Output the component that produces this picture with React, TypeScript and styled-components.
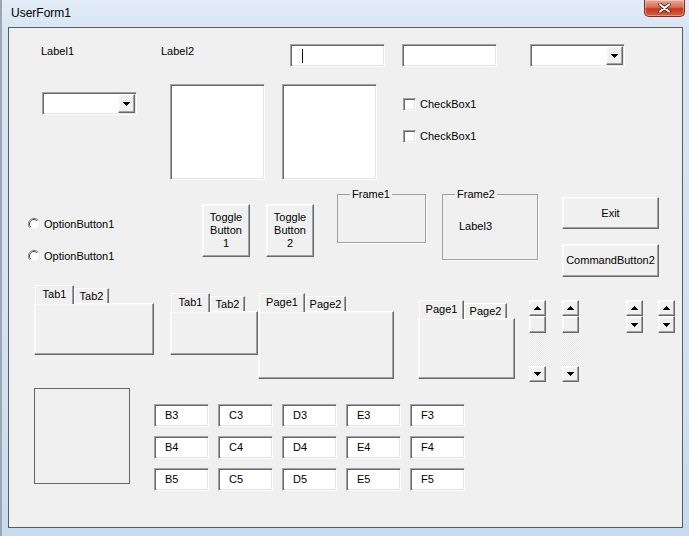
import React from 'react';
import styled, { createGlobalStyle, css } from 'styled-components';

const GlobalStyle = createGlobalStyle`
  html, body { margin: 0; padding: 0; }
  body {
    font-family: 'Liberation Sans', Arial, sans-serif;
    font-size: 11px;
    color: #000;
    background: #cfe0f1;
  }
`;

type Pos = { $x: number; $y: number; $w?: number; $h?: number };

// controls on a UserForm sit at their Left/Top, like a designer canvas
const at = css<Pos>`
  position: absolute;
  left: ${(p) => p.$x}px;
  top: ${(p) => p.$y}px;
  ${(p) => (p.$w !== undefined ? `width: ${p.$w}px;` : '')}
  ${(p) => (p.$h !== undefined ? `height: ${p.$h}px;` : '')}
  box-sizing: border-box;
`;

const sunken = css`
  border: 1px solid;
  border-color: #a0a0a0 #ffffff #ffffff #a0a0a0;
  box-shadow: inset 1px 1px 0 #696969, inset -1px -1px 0 #e3e3e3;
`;

const raised = css`
  border: 1px solid;
  border-color: #ffffff #696969 #696969 #ffffff;
  box-shadow: inset -1px -1px 0 #a0a0a0, inset 1px 1px 0 #f7f7f7;
`;

const Window = styled.div`
  width: 689px;
  height: 536px;
  box-sizing: border-box;
  display: flex;
  flex-direction: column;
  padding: 0 6px 8px 6px;
  border-left: 2px solid #9ba8b4;
  background: linear-gradient(180deg, #e2ecf7 0%, #d6e5f4 6%, #d2e2f2 60%, #c6dbef 100%);
  overflow: hidden;
`;

const TitleBar = styled.div`
  height: 27px;
  display: flex;
  align-items: flex-start;
  justify-content: space-between;
  flex-shrink: 0;
`;

const Title = styled.span`
  font-size: 12px;
  line-height: 15px;
  margin: 6px 0 0 3px;
  color: #000;
`;

const CloseBtn = styled.div`
  width: 41px;
  height: 17px;
  margin-right: -2px;
  box-sizing: border-box;
  border: 1px solid #7a2e22;
  border-top: none;
  border-radius: 0 0 5px 5px;
  background: linear-gradient(180deg, #eaa999 0%, #d96d55 45%, #c23a1f 55%, #d5603f 100%);
  box-shadow: inset 0 0 0 1px rgba(255, 255, 255, 0.35);
  display: flex;
  align-items: center;
  justify-content: center;
`;

const Client = styled.div`
  position: relative;
  flex: 1;
  background: #f0f0f0;
  border: 1px solid #5a5a5a;
`;

const Label = styled.div<Pos>`
  ${at}
  line-height: 13px;
  white-space: nowrap;
`;

const Field = styled.div`
  ${sunken}
  box-sizing: border-box;
  background: #ffffff;
`;

const TextBox = styled(Field)<Pos>`
  ${at}
  display: flex;
  align-items: center;
`;

const Caret = styled.span`
  width: 1px;
  height: 14px;
  margin-left: 11px;
  background: #000;
`;

const ComboBox = styled(Field)<Pos>`
  ${at}
  display: flex;
  justify-content: flex-end;
  padding: 1px;
`;

const DropBtn = styled.div`
  ${raised}
  box-sizing: border-box;
  width: 17px;
  height: 100%;
  background: #f0f0f0;
  display: flex;
  align-items: center;
  justify-content: center;
`;

const ListBox = styled(Field)<Pos>`
  ${at}
`;

const OptionRow = styled.div<Pos>`
  ${at}
  display: flex;
  align-items: center;
  gap: 4px;
  height: 16px;
  white-space: nowrap;
`;

const CheckBox = styled.span`
  ${sunken}
  box-sizing: border-box;
  width: 13px;
  height: 13px;
  background: #fff;
`;

const Button = styled.div<Pos>`
  ${at}
  ${raised}
  background: #f0f0f0;
  display: flex;
  align-items: center;
  justify-content: center;
  text-align: center;
  line-height: 13px;
`;

const Frame = styled.div<Pos>`
  ${at}
  border: 1px solid #a0a0a0;
  box-shadow: 1px 1px 0 #ffffff;
`;

const FrameCaption = styled.span`
  position: absolute;
  top: -7px;
  left: 12px;
  padding: 0 2px;
  line-height: 13px;
  background: #f0f0f0;
`;

const FrameBody = styled.div`
  padding: 25px 0 0 16px;
  line-height: 13px;
`;

const TabStrip = styled.div<Pos>`
  ${at}
  display: flex;
  flex-direction: column;
`;

const TabRow = styled.div`
  display: flex;
  align-items: flex-end;
  height: 18px;
  padding-left: 1px;
  position: relative;
  z-index: 1;
`;

const Tab = styled.div<{ $active?: boolean; $w: number }>`
  box-sizing: border-box;
  width: ${(p) => p.$w}px;
  height: ${(p) => (p.$active ? 19 : 15)}px;
  margin-bottom: ${(p) => (p.$active ? -1 : 0)}px;
  padding-top: ${(p) => (p.$active ? 2 : 1)}px;
  border: 1px solid;
  border-color: #ffffff #696969 transparent #ffffff;
  border-bottom: none;
  box-shadow: inset -1px 0 0 #a0a0a0;
  background: #f0f0f0;
  text-align: center;
  line-height: 13px;
`;

const TabBody = styled.div`
  ${raised}
  box-sizing: border-box;
  flex: 1;
  background: #f0f0f0;
`;

const ScrollBar = styled.div<Pos>`
  ${at}
  display: flex;
  flex-direction: column;
`;

const ArrowBtn = styled.div<{ $h?: number }>`
  ${raised}
  box-sizing: border-box;
  height: ${(p) => p.$h ?? 16}px;
  background: #f0f0f0;
  display: flex;
  align-items: center;
  justify-content: center;
  flex-shrink: 0;
`;

const Track = styled.div`
  flex: 1;
  background-color: #f4f4f4;
  background-image: repeating-conic-gradient(#e4e4e4 0% 25%, #fbfbfb 0% 50%);
  background-size: 2px 2px;
`;

const ImageBox = styled.div<Pos>`
  ${at}
  border: 1px solid #646464;
`;

const CellGrid = styled.div<Pos>`
  ${at}
  display: grid;
  grid-template-columns: repeat(5, 55px);
  grid-auto-rows: 23px;
  gap: 9px;
`;

const Cell = styled(Field)`
  display: flex;
  align-items: center;
  padding-left: 10px;
  line-height: 13px;
`;

const Arrow = ({ up }: { up?: boolean }) => (
  <svg width="7" height="4" viewBox="0 0 7 4" shapeRendering="crispEdges">
    <path d={up ? 'M0 4h7L3.5 0z' : 'M0 0h7L3.5 4z'} fill="#000" />
  </svg>
);

const Radio = () => (
  <svg width="12" height="12" viewBox="0 0 12 12">
    <circle cx="6" cy="6" r="5.5" fill="#fff" />
    <path d="M10 2A5.5 5.5 0 0 0 2 10" fill="none" stroke="#8a8a8a" strokeWidth="1" />
    <path d="M9.2 2.8A4.5 4.5 0 0 0 2.8 9.2" fill="none" stroke="#505050" strokeWidth="1" />
    <path d="M2 10A5.5 5.5 0 0 0 10 2" fill="none" stroke="#e6e6e6" strokeWidth="1" />
  </svg>
);

const CloseGlyph = () => (
  <svg width="13" height="10" viewBox="0 0 13 10">
    <path d="M2 1.5l9 7M11 1.5l-9 7" stroke="#5a1a10" strokeWidth="3.6" strokeLinecap="round" />
    <path d="M2 1.5l9 7M11 1.5l-9 7" stroke="#ffffff" strokeWidth="2.2" strokeLinecap="round" />
  </svg>
);

const tabSets = [
  { x: 25, y: 257, w: 120, h: 70, tabs: ['Tab1', 'Tab2'], widths: [39, 35] },
  { x: 161, y: 265, w: 88, h: 62, tabs: ['Tab1', 'Tab2'], widths: [39, 35] },
  { x: 249, y: 265, w: 136, h: 86, tabs: ['Page1', 'Page2'], widths: [46, 41] },
  { x: 409, y: 272, w: 97, h: 79, tabs: ['Page1', 'Page2'], widths: [45, 43] },
];

const cells = ['B', 'C', 'D', 'E', 'F'];

const App = () => {
  return (
    <>
      <GlobalStyle />
      <Window>
        <TitleBar>
          <Title>UserForm1</Title>
          <CloseBtn>
            <CloseGlyph />
          </CloseBtn>
        </TitleBar>
        <Client>
          <Label $x={32} $y={17}>Label1</Label>
          <Label $x={152} $y={17}>Label2</Label>

          <TextBox $x={281} $y={16} $w={95} $h={23}>
            <Caret />
          </TextBox>
          <TextBox $x={393} $y={16} $w={95} $h={23} />
          <ComboBox $x={521} $y={16} $w={95} $h={23}>
            <DropBtn>
              <Arrow />
            </DropBtn>
          </ComboBox>

          <ComboBox $x={33} $y={64} $w={95} $h={23}>
            <DropBtn>
              <Arrow />
            </DropBtn>
          </ComboBox>
          <ListBox $x={161} $y={56} $w={95} $h={96} />
          <ListBox $x={273} $y={56} $w={95} $h={96} />

          <OptionRow $x={394} $y={68}>
            <CheckBox />
            CheckBox1
          </OptionRow>
          <OptionRow $x={394} $y={100}>
            <CheckBox />
            CheckBox1
          </OptionRow>

          <OptionRow $x={19} $y={188}>
            <Radio />
            OptionButton1
          </OptionRow>
          <OptionRow $x={19} $y={220}>
            <Radio />
            OptionButton1
          </OptionRow>

          <Button $x={193} $y={176} $w={48} $h={53}>
            Toggle
            <br />
            Button
            <br />1
          </Button>
          <Button $x={257} $y={176} $w={48} $h={53}>
            Toggle
            <br />
            Button
            <br />2
          </Button>

          <Frame $x={328} $y={166} $w={89} $h={49}>
            <FrameCaption>Frame1</FrameCaption>
          </Frame>
          <Frame $x={433} $y={166} $w={96} $h={66}>
            <FrameCaption>Frame2</FrameCaption>
            <FrameBody>Label3</FrameBody>
          </Frame>

          <Button $x={553} $y={169} $w={97} $h={32}>Exit</Button>
          <Button $x={553} $y={216} $w={97} $h={33}>CommandButton2</Button>

          {tabSets.map((t) => (
            <TabStrip key={t.x} $x={t.x} $y={t.y} $w={t.w} $h={t.h}>
              <TabRow>
                {t.tabs.map((name, i) => (
                  <Tab key={name} $active={i === 0} $w={t.widths[i]}>
                    {name}
                  </Tab>
                ))}
              </TabRow>
              <TabBody />
            </TabStrip>
          ))}

          <ScrollBar $x={520} $y={272} $w={17} $h={82}>
            <ArrowBtn>
              <Arrow up />
            </ArrowBtn>
            <ArrowBtn $h={17} />
            <Track />
            <ArrowBtn>
              <Arrow />
            </ArrowBtn>
          </ScrollBar>
          <ScrollBar $x={553} $y={272} $w={17} $h={82}>
            <ArrowBtn>
              <Arrow up />
            </ArrowBtn>
            <ArrowBtn $h={17} />
            <Track />
            <ArrowBtn>
              <Arrow />
            </ArrowBtn>
          </ScrollBar>

          <ScrollBar $x={617} $y={272} $w={17} $h={33}>
            <ArrowBtn>
              <Arrow up />
            </ArrowBtn>
            <ArrowBtn $h={17}>
              <Arrow />
            </ArrowBtn>
          </ScrollBar>
          <ScrollBar $x={649} $y={272} $w={17} $h={33}>
            <ArrowBtn>
              <Arrow up />
            </ArrowBtn>
            <ArrowBtn $h={17}>
              <Arrow />
            </ArrowBtn>
          </ScrollBar>

          <ImageBox $x={25} $y={360} $w={96} $h={96} />

          <CellGrid $x={145} $y={376}>
            {[3, 4, 5].map((row) =>
              cells.map((col) => <Cell key={col + row}>{col + row}</Cell>)
            )}
          </CellGrid>
        </Client>
      </Window>
    </>
  );
};

export default App;
